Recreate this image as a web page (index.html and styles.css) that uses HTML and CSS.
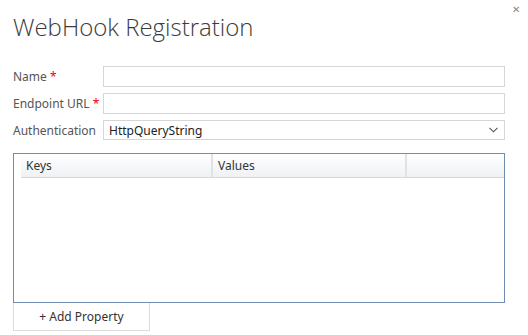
FILE: index.html
```html
<!DOCTYPE html>
<html lang="en">
<head>
  <meta charset="UTF-8" />
  <title>WebHook Registration</title>
  <link rel="stylesheet" href="styles.css">
</head>
<body>
  <div class="dialog">
    <div class="close">&#x2715;</div>
    <h1>WebHook Registration</h1>

    <div class="form">
      <div class="row">
        <label>Name <span class="req">*</span></label>
        <input type="text" class="field">
      </div>
      <div class="row">
        <label>Endpoint URL <span class="req">*</span></label>
        <input type="text" class="field">
      </div>
      <div class="row">
        <label>Authentication</label>
        <div class="select">
          <span>HttpQueryString</span>
          <svg width="9" height="6" viewBox="0 0 9 6"><path d="M0.5 0.8 L4.5 4.8 L8.5 0.8" fill="none" stroke="#555" stroke-width="1.1"/></svg>
        </div>
      </div>
    </div>

    <div class="grid">
      <div class="grid-head">
        <div class="col keys">Keys</div>
        <div class="col values">Values</div>
        <div class="col blank"></div>
      </div>
    </div>
    <button class="add">+ Add Property</button>
  </div>
</body>
</html>
```

FILE: styles.css
```css
body {
  margin: 0;
  background-color: #fff;
  color: #555;
  font-family: "Segoe UI", "Noto Sans", sans-serif;
  font-size: 12px;
}

.dialog {
  position: relative;
  padding: 9px 23px 0 13px;
}

.close {
  position: absolute;
  top: 2px;
  right: 8px;
  font-size: 10px;
  color: #888;
}

h1 {
  margin: 0 0 21px 0;
  font-family: "Segoe UI Light", "Open Sans", sans-serif;
  font-size: 24px;
  font-weight: 300;
  color: #3c3c3c;
  line-height: 36px;
}

.form {
  display: flex;
  flex-direction: column;
  gap: 6px;
  margin-bottom: 13px;
}

.row {
  display: flex;
  align-items: center;
}

.row label {
  width: 90px;
  flex-shrink: 0;
}

.req {
  color: #e00;
}

.field {
  box-sizing: border-box;
  width: 402px;
  height: 21px;
  margin: 0;
  border: 1px solid #d6d6d6;
  padding: 0 5px;
  font-family: inherit;
  font-size: 12px;
}

.select {
  box-sizing: border-box;
  width: 402px;
  height: 20px;
  border: 1px solid #d6d6d6;
  display: flex;
  align-items: center;
  justify-content: space-between;
  padding: 0 6px 0 5px;
  color: #222;
}

.grid {
  box-sizing: border-box;
  width: 492px;
  height: 150px;
  border: 1px solid #6f8db0;
  padding-left: 7px;
}

.grid-head {
  display: flex;
  height: 23px;
  background: linear-gradient(#fff, #f0f1f4);
  border-bottom: 1px solid #d8d8d8;
}

.col {
  box-sizing: border-box;
  line-height: 23px;
  padding-left: 5px;
  color: #333;
  border-right: 2px solid #e2e2e2;
}

.keys {
  width: 192px;
}

.values {
  width: 194px;
}

.blank {
  flex-grow: 1;
  border-right: none;
}

.add {
  box-sizing: border-box;
  width: 137px;
  height: 28px;
  margin: 0;
  background: #fff;
  border: 1px solid #dcdcdc;
  border-top: none;
  font-family: inherit;
  font-size: 12px;
  color: #333;
}
```
